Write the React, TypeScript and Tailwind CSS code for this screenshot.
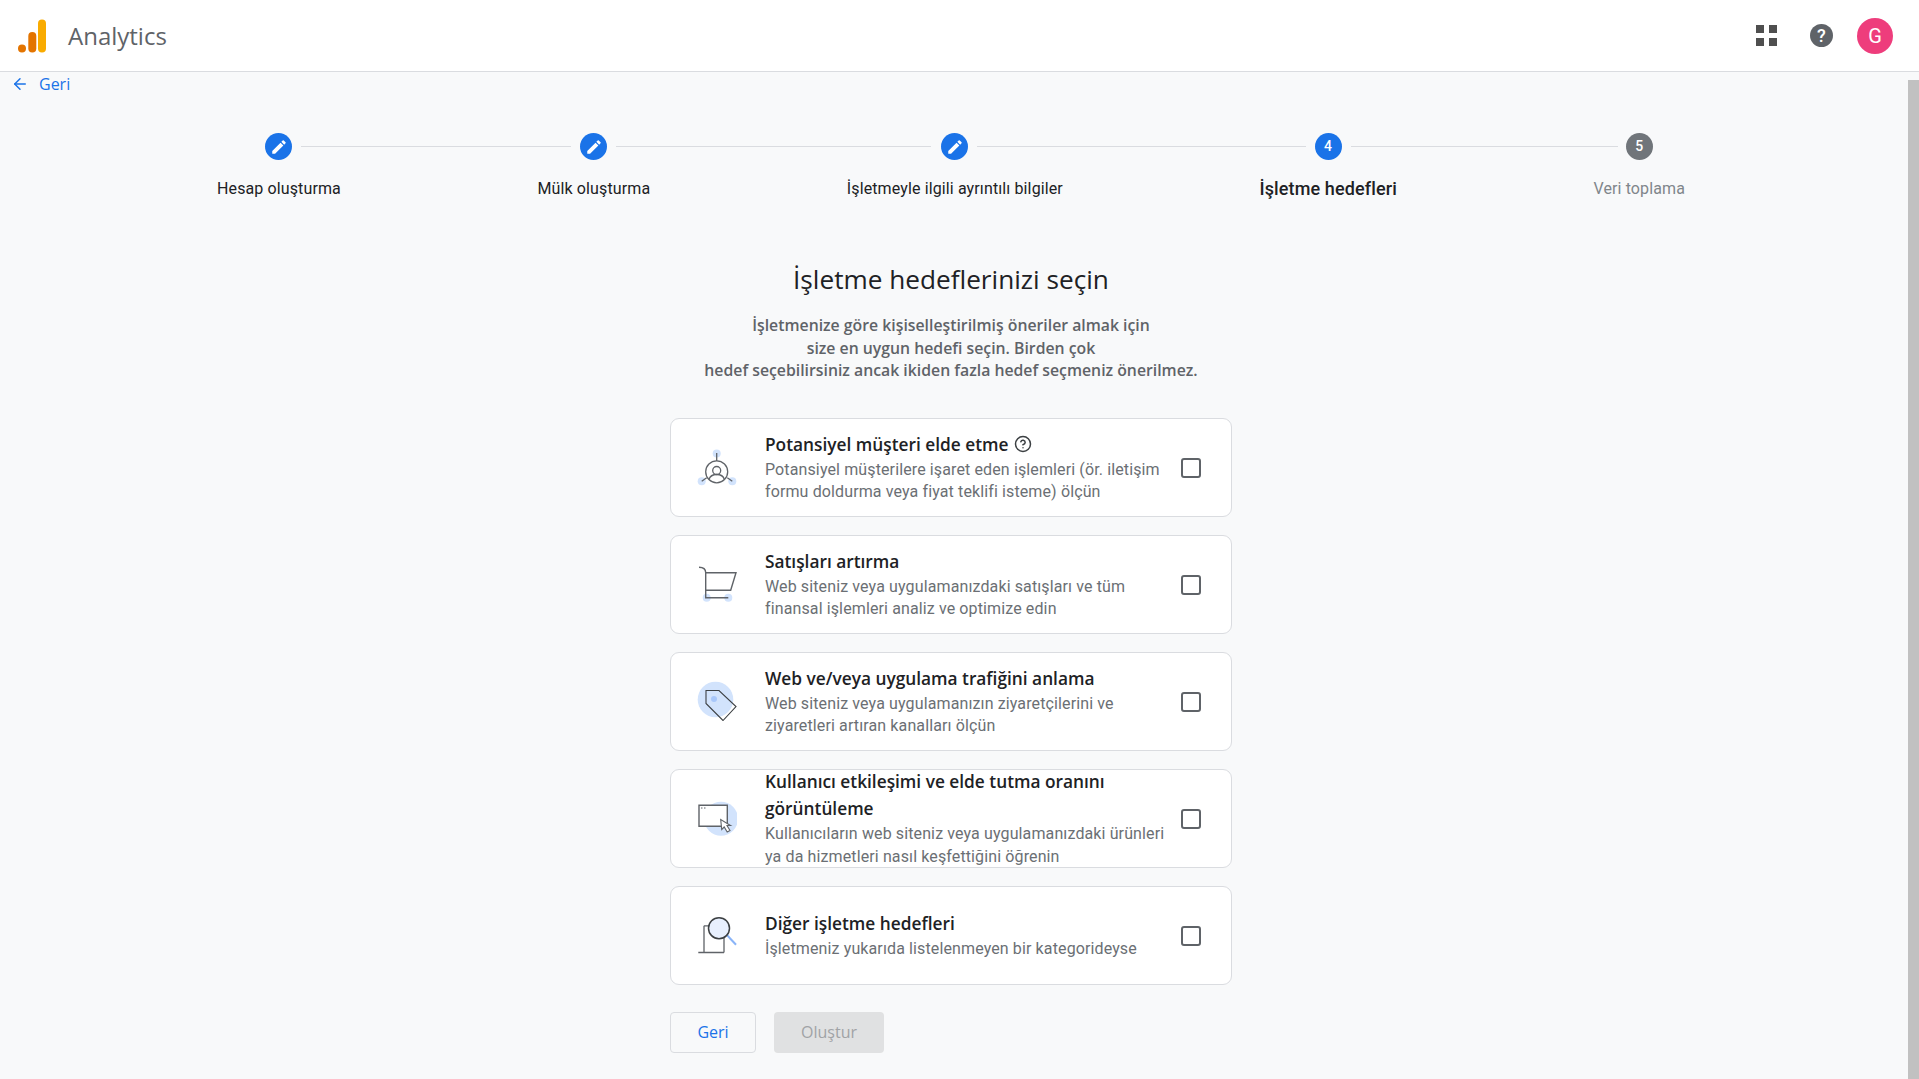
import { ArrowLeft, CircleHelp } from "lucide-react";

const steps = [
  { label: "Hesap oluşturma", state: "done", line: "w-[270px]" },
  { label: "Mülk oluşturma", state: "done", line: "w-[315px]" },
  { label: "İşletmeyle ilgili ayrıntılı bilgiler", state: "done", line: "w-[329px]" },
  { label: "İşletme hedefleri", state: "active", num: "4", line: "w-[267px]" },
  { label: "Veri toplama", state: "todo", num: "5" },
];

function LeadIcon() {
  return (
    <svg viewBox="0 0 40 40" className="h-10 w-10" fill="none" stroke="#5f6368" strokeWidth="1.3">
      <circle cx="19.700" cy="6.500" r="4" fill="#d2e3fc" stroke="none" />
      <circle cx="4.700" cy="34.200" r="4" fill="#d2e3fc" stroke="none" />
      <circle cx="35.300" cy="34.200" r="4" fill="#d2e3fc" stroke="none" />
      <path d="M19.700 6v8M4.700 34.200l5-3.400M35.300 34.200l-5-3.400" />
      <circle cx="19.700" cy="24.800" r="11" />
      <circle cx="19.700" cy="23.500" r="4" />
      <path d="M12 32.500c1-3.500 4-5 7.700-5s6.700 1.500 7.700 5" />
    </svg>
  );
}

function CartIcon() {
  return (
    <svg viewBox="0 0 40 40" className="h-10 w-10" fill="none" stroke="#5f6368" strokeWidth="1.4">
      <circle cx="9.700" cy="33.800" r="4" fill="#d2e3fc" stroke="none" />
      <circle cx="31.300" cy="33.800" r="4" fill="#d2e3fc" stroke="none" />
      <path d="M2 3.200c4 0 6.700 1.500 6.700 5.600V33.800H31.300M8.700 8.800H39L33.700 26.200H8.700" />
    </svg>
  );
}

function TagIcon() {
  return (
    <svg viewBox="0 0 40 40" className="h-10 w-10" fill="none" stroke="#3c4043" strokeWidth="1.1">
      <circle cx="18.500" cy="18.500" r="17.800" fill="#d2e3fc" stroke="none" />
      <circle cx="17" cy="18" r="3" fill="#a8c7fa" stroke="none" />
      <path d="M9 9.500h13l17 16-13 14-17-17z" />
    </svg>
  );
}

function WindowIcon() {
  return (
    <svg viewBox="0 0 40 40" className="h-10 w-10" fill="none" stroke="#5f6368" strokeWidth="1.4">
      <circle cx="24" cy="20.700" r="17" fill="#d2e3fc" stroke="none" />
      <path d="M2 7.200h28.300v21H2z" fill="#fff" />
      <path d="M4 10h1.500M7 10h1.500" strokeWidth="1" />
      <path d="M23.700 21.500l1 10 2.500-2.500 3 5 2.800-1.500-3-5h3.500z" fill="#fff" strokeWidth="1.100" />
    </svg>
  );
}

function SearchIcon() {
  return (
    <svg viewBox="0 0 40 40" className="h-10 w-10" fill="none" stroke="#5f6368" strokeWidth="1.3">
      <path d="M7 10.800h6M7 10.800v26.700M27 22v15.500M1.300 37.500H27" />
      <path d="M29.700 19.800l9.300 10" stroke="#8ab4f8" strokeWidth="2" />
      <circle cx="22" cy="13.200" r="10.500" fill="#e8f0fe" stroke="#3c4043" strokeWidth="1.500" />
    </svg>
  );
}

const goals = [
  {
    title: "Potansiyel müşteri elde etme",
    help: true,
    icon: <LeadIcon />,
    lines: ["Potansiyel müşterilere işaret eden işlemleri (ör. iletişim", "formu doldurma veya fiyat teklifi isteme) ölçün"],
  },
  {
    title: "Satışları artırma",
    icon: <CartIcon />,
    lines: ["Web siteniz veya uygulamanızdaki satışları ve tüm", "finansal işlemleri analiz ve optimize edin"],
  },
  {
    title: "Web ve/veya uygulama trafiğini anlama",
    icon: <TagIcon />,
    lines: ["Web siteniz veya uygulamanızın ziyaretçilerini ve", "ziyaretleri artıran kanalları ölçün"],
  },
  {
    title: "Kullanıcı etkileşimi ve elde tutma oranını görüntüleme",
    icon: <WindowIcon />,
    lines: ["Kullanıcıların web siteniz veya uygulamanızdaki ürünleri", "ya da hizmetleri nasıl keşfettiğini öğrenin"],
  },
  {
    title: "Diğer işletme hedefleri",
    icon: <SearchIcon />,
    lines: ["İşletmeniz yukarıda listelenmeyen bir kategorideyse"],
  },
];

function StepCircle({ state, num }: { state: string; num?: string }) {
  return (
    <div
      className={`flex h-[27px] w-[27px] items-center justify-center rounded-full text-[14px] font-medium text-white ${
        state === "todo" ? "bg-[#70757a]" : "bg-[#1a73e8]"
      }`}
    >
      {num ? (
        num
      ) : (
        <svg viewBox="0 0 24 24" className="h-[18px] w-[18px]" fill="#fff">
          <path d="M3 17.250V21h3.750L17.810 9.940l-3.750-3.750L3 17.250zM20.710 7.040a1 1 0 0 0 0-1.410l-2.340-2.340a1 1 0 0 0-1.410 0l-1.830 1.830 3.750 3.750 1.830-1.830z" />
        </svg>
      )}
    </div>
  );
}

export default function App() {
  return (
    <div className="flex h-screen flex-col overflow-hidden bg-[#f8f9fa] font-['Roboto',sans-serif] tracking-[0.12px]">
      {/* Top bar */}
      <header className="flex h-[72px] shrink-0 items-center justify-between border-b border-[#dadce0] bg-white pl-[18px] pr-[26px]">
        <div className="flex items-center gap-[22px]">
          <svg viewBox="0 0 28 34" className="h-[34px] w-[28px]">
            <rect x="20" y="0.500" width="8" height="33" rx="4" fill="#f9ab00" />
            <rect x="10.300" y="13" width="8" height="20.500" rx="4" fill="#e37400" />
            <circle cx="4" cy="29.500" r="4" fill="#e37400" />
          </svg>
          <span className="font-['Open_Sans',sans-serif] text-[24px] tracking-normal text-[#5f6368]">Analytics</span>
        </div>
        <div className="flex items-center">
          <div className="mr-[33px] grid grid-cols-2 gap-[5px]">
            <span className="h-[8px] w-[8px] bg-[#4f4f4f]" />
            <span className="h-[8px] w-[8px] bg-[#4f4f4f]" />
            <span className="h-[8px] w-[8px] bg-[#4f4f4f]" />
            <span className="h-[8px] w-[8px] bg-[#4f4f4f]" />
          </div>
          <div className="mr-[24px] flex h-[23px] w-[23px] items-center justify-center rounded-full bg-[#5f6368] text-[18px] font-medium text-white">
            ?
          </div>
          <div className="flex h-9 w-9 items-center justify-center rounded-full bg-[#ee3d7c] text-[20px] text-white">G</div>
        </div>
      </header>

      <div className="flex min-h-0 flex-1">
        <main className="min-w-0 flex-1 pr-[6px]">
          <a className="ml-[11px] mt-[1px] flex w-fit items-center gap-[10px] font-['Open_Sans',sans-serif] text-[16px] leading-[22px] font-medium tracking-normal text-[#1a73e8]">
            <ArrowLeft className="h-[18px] w-[18px]" strokeWidth={2} />
            Geri
          </a>

          {/* Stepper */}
          <div className="mx-auto mt-[38px] flex w-[1468px] justify-between">
            {steps.map((s) => (
              <div key={s.label} className="relative flex flex-col items-center">
                <StepCircle state={s.state} num={s.num} />
                {s.line && <span className={`absolute left-[calc(50%+22.500px)] top-[13px] h-px bg-[#dadce0] ${s.line}`} />}
                <span
                  className={`mt-[17px] leading-[24px] ${
                    s.state === "active"
                      ? "text-[18px] font-medium text-[#202124]"
                      : s.state === "todo"
                        ? "text-[16px] text-[#80868b]"
                        : "text-[16px] text-[#202124]"
                  }`}
                >
                  {s.label}
                </span>
              </div>
            ))}
          </div>

          {/* Goals */}
          <div className="mx-auto flex w-[562px] flex-col">
            <h1 className="mt-[60px] text-center font-['Open_Sans',sans-serif] text-[26.200px] leading-[36px] tracking-normal text-[#202124]">
              İşletme hedeflerinizi seçin
            </h1>
            <p className="mt-[17px] text-center font-['Open_Sans',sans-serif] text-[15.800px] leading-[22.500px] font-semibold tracking-normal text-[#5f6368]">
              İşletmenize göre kişiselleştirilmiş öneriler almak için
              <br />
              size en uygun hedefi seçin. Birden çok
              <br />
              hedef seçebilirsiniz ancak ikiden fazla hedef seçmeniz önerilmez.
            </p>

            <div className="mt-[36px] flex flex-col gap-[18px]">
              {goals.map((g) => (
                <div
                  key={g.title}
                  className="flex h-[99px] items-center rounded-[9px] border border-[#dadce0] bg-white pl-[26px] pr-[30px]"
                >
                  <div className="w-[40px] shrink-0">{g.icon}</div>
                  <div className="ml-[28px] flex-1 pr-[8px]">
                    <div className="flex items-center gap-[6px] font-['Open_Sans',sans-serif] text-[17.300px] leading-[27px] font-semibold tracking-normal text-[#202124]">
                      <span>{g.title}</span>
                      {g.help && <CircleHelp className="h-[18px] w-[18px] shrink-0 text-[#3c4043]" strokeWidth={2} />}
                    </div>
                    <div className="pt-px">
                      {g.lines.map((l) => (
                        <div key={l} className="text-[16px] leading-[22.500px] text-[#6b6f74]">
                          {l}
                        </div>
                      ))}
                    </div>
                  </div>
                  <span className="mt-[2px] h-[20px] w-[20px] shrink-0 rounded-[3px] border-[2.500px] border-[#5f6368]" />
                </div>
              ))}
            </div>

            <div className="mt-[27px] flex gap-[18px]">
              <button className="h-[41px] w-[86px] rounded-[4px] border border-[#dadce0] font-['Open_Sans',sans-serif] text-[16px] font-medium tracking-normal text-[#1a73e8]">
                Geri
              </button>
              <button className="h-[41px] w-[110px] rounded-[4px] bg-[#e0e1e2] font-['Open_Sans',sans-serif] text-[16px] font-medium tracking-normal text-[#a0a3a6]">
                Oluştur
              </button>
            </div>
          </div>
        </main>

        {/* Scrollbar */}
        <div className="mt-[8px] w-[11px] shrink-0 bg-[#c1c1c1]" />
      </div>
    </div>
  );
}
